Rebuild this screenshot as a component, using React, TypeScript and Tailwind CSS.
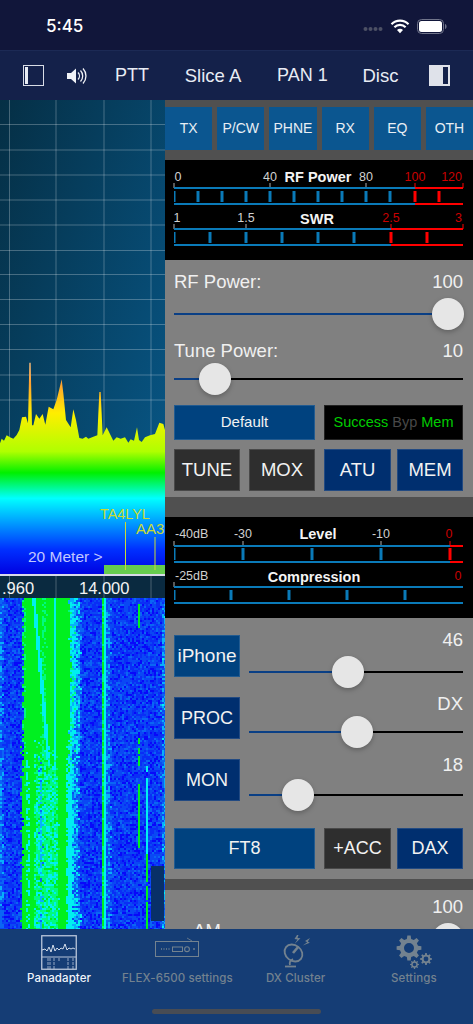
import { useMemo } from "react";

const SANS = "font-['Liberation_Sans',Arial,sans-serif]";

// seeded noise so the waterfall stays the same between renders
function makeRandom(seed: number) {
  let s = seed;
  return () => {
    s = (s * 1664525 + 1013904223) % 4294967296;
    return s / 4294967296;
  };
}

const WATERFALL_COLORS = ["#0808fa", "#0a2ef6", "#0a48f4", "#0a66f4", "#08b0fa", "#00f0f0", "#00fa80", "#00f020"];

function waterfallLevel(px: number, y: number, r: number, r2: number) {
  let v = 0.06 + r * 0.36;
  const n = r2 - 0.5;
  const x = px + n * 2.5;
  const wobble = Math.sin(y / 47) * 1.5;
  if (x < 2) v += 0.2;
  if (x > 161) v += 0.22;
  if (x > 105 && x < 110) v += 0.18;
  if (x > 72 && x < 79 + wobble) v = 0.3 + r * 0.42;
  if (px >= 102 && px < 104) v = 0.84 + r * 0.14;
  if (px === 104) v = 0.66;
  if (px === 138 && ((y > 4 && y < 30) || (y > 138 && y < 145) || (y > 148 && y < 155) || (y > 157 && y < 168) || (y > 184 && y < 250))) v = 0.98;
  if (px === 146 && y > 167 && !(y > 172 && y < 180) && !(y > 283 && y < 288) && !(y > 300 && y < 303)) v = y > 255 ? 0.95 : 0.7;
  if (y + n * 50 < 165) {
    const right = 68 + wobble;
    if (x >= 22 && x < right) {
      const slant = 33 + (y / 165) * 15;
      if (Math.abs(px - slant) < 1.6) v = 0.66;
      else if (Math.abs(px - 54) < 1.2) v = 0.72;
      else if (x < 24 || Math.abs(x - 43) < 2) v = 0.8 + r * 0.14;
      else v = 0.92 + r * 0.08;
    } else if (x >= right && x < 73 + wobble) v = 0.55 + r * 0.25;
  } else {
    if (x >= 21 && x < 26) v = 0.9 + r * 0.1;
    else if (x >= 26 && x < 28) v = 0.68;
    else if (x >= 28 && x < 34) v = 0.88 + r * 0.12;
    else if (x >= 34 && x < 57) v = 0.66 + r * 0.26 - (x > 39 && x < 41 ? 0.2 : 0);
    else if (x >= 57 && x < 66) v = 0.92 + r * 0.08;
    else if (x >= 66 && x < 72) v = 0.64 + r * 0.1;
  }
  return Math.min(WATERFALL_COLORS.length - 1, Math.floor(v * WATERFALL_COLORS.length));
}

function Waterfall() {
  const paths = useMemo(() => {
    const rnd = makeRandom(73);
    const d = WATERFALL_COLORS.map(() => "");
    for (let y = 0; y < 332; y += 2) {
      for (let x = 0; x < 166; x += 2) {
        const i = waterfallLevel(x, y, rnd(), rnd());
        d[i] += `M${x} ${y}h2v2h-2z`;
      }
    }
    return d;
  }, []);
  return (
    <svg viewBox="0 0 165 331" className="block h-[331px] w-[165px]" shapeRendering="crispEdges">
      <g className="blur-[0.7px]">
        <rect width="165" height="331" fill="#0808fa" />
        {paths.map((d, i) => (
          <path key={i} d={d} fill={WATERFALL_COLORS[i]} />
        ))}
      </g>
      <rect x="151" y="268" width="13" height="55" fill="#083068" />
    </svg>
  );
}

const SPECTRUM = [
  [0, 280], [5, 266], [12, 272], [20, 256], [30, 262], [40, 266], [50, 255], [58, 240], [66, 202], [78, 200], [84, 220], [88, 38], [92, 38], [96, 226],
  [100, 226], [108, 192], [118, 206], [128, 192], [136, 224], [146, 170], [160, 178], [170, 150], [185, 88], [190, 130], [198, 210], [212, 232], [220, 178],
  [228, 210], [238, 264], [248, 266], [258, 260], [265, 266], [280, 260], [292, 256], [298, 126], [302, 126], [308, 256], [320, 232], [340, 272], [350, 262],
  [362, 266], [375, 262], [385, 278], [392, 268], [402, 272], [411, 232], [417, 270], [425, 276], [435, 262], [450, 256], [465, 252], [478, 218], [490, 222], [495, 240],
];

const GRID_X = [9.5, 56, 104, 151];
const GRID_Y = [124.5, 150, 175, 200, 225, 250.5, 274.5, 299.5, 324.5, 349.5, 375, 400];

function Panadapter() {
  const points = SPECTRUM.map(([x, y]) => `${x / 3},${350 + y / 3}`).join(" ");
  return (
    <svg viewBox="0 100 165 498" className="block h-[498px] w-[165px]">
      <defs>
        <linearGradient id="panBg" x1="0" y1="0" x2="1" y2="1">
          <stop offset="0" stopColor="#052f45" />
          <stop offset="1" stopColor="#085a8c" />
        </linearGradient>
        <linearGradient id="spec" gradientUnits="userSpaceOnUse" x1="0" y1="362" x2="0" y2="575">
          <stop offset="0" stopColor="#ffc080" />
          <stop offset="0.1" stopColor="#ffa030" />
          <stop offset="0.24" stopColor="#ffee00" />
          <stop offset="0.42" stopColor="#b0ff00" />
          <stop offset="0.52" stopColor="#00f000" />
          <stop offset="0.64" stopColor="#00ffff" />
          <stop offset="0.75" stopColor="#00a0ff" />
          <stop offset="0.88" stopColor="#0030ff" />
          <stop offset="1" stopColor="#0000e0" />
        </linearGradient>
      </defs>
      <rect x="0" y="100" width="165" height="476" fill="url(#panBg)" />
      <rect x="0" y="576" width="165" height="22" fill="#0a2a40" />
      {GRID_X.map((x) => (
        <line key={x} x1={x} x2={x} y1="100" y2="598" stroke="#ffffff" strokeOpacity="0.26" strokeWidth="1" />
      ))}
      {GRID_Y.map((y) => (
        <line key={y} x1="0" x2="165" y1={y} y2={y} stroke="#ffffff" strokeOpacity="0.26" strokeWidth="1" />
      ))}
      <polygon points={`${points} 165,574 0,574`} fill="url(#spec)" />
      <rect x="104" y="565" width="61" height="9" fill="#66cc4e" />
      <line x1="125.5" x2="125.5" y1="522" y2="570" stroke="#c8dc32" />
      <line x1="155" x2="155" y1="537" y2="570" stroke="#c8dc32" />
      <text x="100" y="519" fontSize="14.4" fill="#c8dc32">TA4LYL</text>
      <text x="136" y="534" fontSize="15" fill="#c8dc32">AA3</text>
      <text x="28" y="562" fontSize="15.5" fill="#c0c8ff">20 Meter &gt;</text>
      <rect x="0" y="574" width="165" height="2" fill="#d8d8e8" />
      <text x="2" y="594" fontSize="16.5" fill="#f4f4f4">.960</text>
      <text x="79" y="594" fontSize="16.5" fill="#f4f4f4">14.000</text>
    </svg>
  );
}

type MeterLabel = { x: number; t: string; y: number; anchor?: "start" | "middle" | "end"; red?: boolean; bold?: boolean };
type MeterScale = { top: number; barTop: number; barBottom: number; bottom: number; split: number; ticks: number[]; bars: number[]; labels: MeterLabel[] };

const BLUE = "#0a7ab8";
const RED = "#ff0000";

function Meter({ y, h, scales }: { y: number; h: number; scales: MeterScale[] }) {
  return (
    <svg viewBox={`165 ${y} 308 ${h}`} className="block w-[308px] bg-black" style={{ height: h }}>
      {scales.map((s, i) => (
        <g key={i}>
          {s.labels.map((l) => (
            <text
              key={l.t}
              x={l.x}
              y={l.y}
              fontSize={l.bold ? 14.5 : 12.5}
              fontWeight={l.bold ? 700 : 400}
              textAnchor={l.anchor ?? "middle"}
              fill={l.red ? "#c80000" : l.bold ? "#f4f4f4" : "#d0d0d0"}
            >
              {l.t}
            </text>
          ))}
          {s.ticks.map((x) => (
            <line key={x} x1={x} x2={x} y1={s.top - 5} y2={s.top} stroke={x >= s.split ? RED : "#b0b0b0"} strokeWidth="1" />
          ))}
          <rect x="174" y={s.top - 1} width={s.split - 174} height="2" fill={BLUE} />
          <rect x={s.split} y={s.top - 1} width={463 - s.split} height="2" fill={RED} />
          {s.bars.map((x) => (
            <rect
              key={x}
              x={x === 174 ? 174 : x - 1.5}
              y={s.barTop}
              width={x === 174 ? 1.5 : 3}
              height={s.barBottom - s.barTop}
              fill={x >= s.split ? RED : BLUE}
            />
          ))}
          <rect x="174" y={s.bottom - 1} width={s.split - 174} height="2" fill={BLUE} />
          <rect x={s.split} y={s.bottom - 1} width={463 - s.split} height="2" fill={RED} />
        </g>
      ))}
    </svg>
  );
}

const POWER_SCALES: MeterScale[] = [
  {
    top: 188, barTop: 191, barBottom: 202, bottom: 204, split: 415,
    ticks: [174, 270, 366, 415, 463],
    bars: [174, 198, 222, 246, 270, 294, 318, 342, 366, 390, 415, 439],
    labels: [
      { x: 178, y: 181, t: "0" }, { x: 270, y: 181, t: "40" }, { x: 318, y: 182, t: "RF Power", bold: true }, { x: 366, y: 181, t: "80" },
      { x: 415, y: 181, t: "100", red: true }, { x: 462, y: 181, t: "120", anchor: "end", red: true },
    ],
  },
  {
    top: 229, barTop: 232, barBottom: 243, bottom: 245, split: 391,
    ticks: [174, 246, 391, 463],
    bars: [174, 210, 246, 282, 318, 354, 391, 427],
    labels: [
      { x: 177, y: 222, t: "1" }, { x: 246, y: 222, t: "1.5" }, { x: 317, y: 224, t: "SWR", bold: true },
      { x: 391, y: 222, t: "2.5", red: true }, { x: 462, y: 222, t: "3", anchor: "end", red: true },
    ],
  },
];

const MIC_SCALES: MeterScale[] = [
  {
    top: 546, barTop: 548, barBottom: 560, bottom: 562, split: 450,
    ticks: [174, 243, 381, 450],
    bars: [174, 243, 312, 381, 450],
    labels: [
      { x: 175, y: 538, t: "-40dB", anchor: "start" }, { x: 243, y: 538, t: "-30" }, { x: 318, y: 539, t: "Level", bold: true },
      { x: 381, y: 538, t: "-10" }, { x: 449, y: 538, t: "0", red: true },
    ],
  },
  {
    top: 587, barTop: 590, barBottom: 600, bottom: 603, split: 463,
    ticks: [174],
    bars: [174, 231, 289, 347, 405],
    labels: [
      { x: 175, y: 580, t: "-25dB", anchor: "start" }, { x: 314, y: 582, t: "Compression", bold: true }, { x: 458, y: 580, t: "0", red: true },
    ],
  },
];

function Slider({ thumb, className }: { thumb: number; className?: string }) {
  return (
    <div className={`relative h-[32px] ${className ?? ""}`}>
      <div className="absolute left-0 right-0 top-[15px] h-[2px] bg-black" />
      <div className="absolute left-0 top-[15px] h-[2px] bg-[#0a3f85]" style={{ width: thumb }} />
      <div
        className="absolute top-0 -ml-[16px] h-[32px] w-[32px] rounded-full bg-[#e6e6e6] shadow-[0_2px_5px_rgba(0,0,0,0.25)]"
        style={{ left: thumb }}
      />
    </div>
  );
}

function Btn({ children, className }: { children: React.ReactNode; className: string }) {
  return <div className={`flex items-center justify-center border border-[#ffffff22] text-[#f2f2f2] ${className}`}>{children}</div>;
}

function TabIcon({ children, w, h, className }: { children: React.ReactNode; w: number; h: number; className?: string }) {
  return (
    <svg viewBox={`0 0 ${w} ${h}`} width={w} height={h} className={`block ${className ?? ""}`}>
      {children}
    </svg>
  );
}

function gearPath(cx: number, cy: number, r: number, hole: number, teeth: number) {
  const inner = r * 0.74;
  const step = (Math.PI * 2) / teeth;
  let d = "";
  for (let i = 0; i < teeth; i++) {
    const a = i * step - Math.PI / 2;
    const pts: [number, number][] = [
      [inner, a - step * 0.3],
      [r, a - step * 0.17],
      [r, a + step * 0.17],
      [inner, a + step * 0.3],
    ];
    pts.forEach(([rad, ang], k) => {
      d += `${i === 0 && k === 0 ? "M" : "L"}${(cx + rad * Math.cos(ang)).toFixed(2)} ${(cy + rad * Math.sin(ang)).toFixed(2)}`;
    });
  }
  d += `Z M${cx - hole} ${cy}a${hole} ${hole} 0 1 0 ${hole * 2} 0a${hole} ${hole} 0 1 0 ${-hole * 2} 0Z`;
  return d;
}

const MUTED = "#73828f";

function PanadapterIcon() {
  const c = "#b9c6da";
  return (
    <TabIcon w={36} h={35} className="mt-[6px]">
      <rect x="0.75" y="0.75" width="34.5" height="33.5" fill="none" stroke={c} strokeWidth="1.3" />
      <line x1="1" x2="35" y1="22" y2="22" stroke={c} strokeWidth="1" />
      <path d="M1 15l3-1 2 2 2-4 2 5 2-7 2 6 2-3 2 2 2-2 2 1 2-5 2 6 2-2 2 1 2-1 2 1" fill="none" stroke="#e6ecf4" strokeWidth="0.9" />
      <path d="M7 23v11M9 23v11M13 23v11M18 23v3M27 23v11M32 23v11" stroke={c} strokeWidth="0.8" strokeDasharray="3 1" />
    </TabIcon>
  );
}

function FlexIcon() {
  return (
    <TabIcon w={44} h={35} className="mt-[6px]">
      <rect x="0.5" y="6.5" width="43" height="15" fill="none" stroke={MUTED} strokeWidth="1" />
      <path d="M37 6l-5-3" stroke={MUTED} strokeWidth="0.8" />
      <path d="M6 14h1M8.5 14h1M11 14h1M13.5 14h1" stroke={MUTED} strokeWidth="1.6" />
      <rect x="17.5" y="12" width="10" height="4.5" fill="none" stroke={MUTED} strokeWidth="1" />
      <circle cx="32" cy="14.2" r="2.4" fill="none" stroke={MUTED} strokeWidth="1.1" />
      <circle cx="39" cy="14" r="0.9" fill={MUTED} />
    </TabIcon>
  );
}

function DishIcon() {
  return (
    <TabIcon w={36} h={35} className="mt-[6px]">
      <path d="M12 30c-1-3 1-5 3-6" fill="none" stroke={MUTED} strokeWidth="1.8" />
      <path d="M7 31.5h11" stroke={MUTED} strokeWidth="1.8" />
      <ellipse cx="15.5" cy="18" rx="9.5" ry="7.8" transform="rotate(38 15.5 18)" fill="none" stroke={MUTED} strokeWidth="1.8" />
      <path d="M15 18l5.5-6.5" stroke={MUTED} strokeWidth="2.6" />
      <path d="M19 0l-2.5 4 3 .4-3 4.6 6-5.8-3-.3 1-3z" fill={MUTED} />
      <path d="M32 3l-5 3 2.3 1.2-4.5 3.3 7-2.8-2-1.2z" fill={MUTED} />
    </TabIcon>
  );
}

function GearsIcon() {
  return (
    <TabIcon w={36} h={35} className="mt-[6px]">
      <path d={gearPath(13, 13, 12.5, 5, 8)} fill={MUTED} fillRule="evenodd" />
      <path d={gearPath(30, 24, 6, 2.4, 8)} fill={MUTED} fillRule="evenodd" />
      <path d={gearPath(18.5, 29.5, 4.5, 1.8, 8)} fill={MUTED} fillRule="evenodd" />
    </TabIcon>
  );
}

const TABS = [
  { label: "Panadapter", icon: <PanadapterIcon />, active: true },
  { label: "FLEX-6500 settings", icon: <FlexIcon />, active: false },
  { label: "DX Cluster", icon: <DishIcon />, active: false },
  { label: "Settings", icon: <GearsIcon />, active: false },
];

export default function App() {
  return (
    <div className={`${SANS} flex h-[1024px] w-[473px] flex-col overflow-hidden bg-[#11163a]`}>
      {/* status bar */}
      <div className="flex h-[50px] items-center pt-[3px] pr-[26px] pl-[46px]">
        <span className="font-['Inter',sans-serif] text-[17px] font-medium text-white">5:45</span>
        <div className="ml-auto flex items-center">
          <svg width="21" height="6" viewBox="0 0 21 6" className="mt-[5px] mr-[6px]">
            {[2.5, 7.5, 12.5, 17.5].map((x) => (
              <circle key={x} cx={x} cy="3" r="2" fill="#4c5064" />
            ))}
          </svg>
          <svg width="20" height="15" viewBox="0 0 20 15" className="mr-[7px]">
            <path d="M1.5 5.2a12 12 0 0 1 17 0M4.4 8.2a8 8 0 0 1 11.2 0" fill="none" stroke="#fff" strokeWidth="2.2" />
            <path d="M7 11a4.2 4.2 0 0 1 6 0l-3 3.2z" fill="#fff" />
          </svg>
          <svg width="30" height="15" viewBox="0 0 30 15">
            <rect x="0.5" y="0.5" width="26" height="14" rx="4" fill="none" stroke="#70748a" />
            <rect x="2" y="2" width="23" height="11" rx="2.5" fill="#fff" />
            <path d="M28 5v5c1-.3 1.6-1.3 1.6-2.5S29 5.3 28 5z" fill="#70748a" />
          </svg>
        </div>
      </div>

      {/* nav bar */}
      <div className="flex h-[50px] items-center border-t border-[#1c2a55] bg-[#14214a] pl-[23px] text-[18px] text-[#e8ecf4]">
        <svg width="21" height="21" viewBox="0 0 21 21" className="shrink-0">
          <rect x="0.5" y="0.5" width="20" height="20" fill="none" stroke="#d8dce6" />
          <rect x="2" y="2" width="3" height="17" fill="#e8ecf4" />
        </svg>
        <svg width="21" height="18" viewBox="0 0 21 18" className="ml-[23px] shrink-0">
          <path d="M0 6h4l5-4.5v15L4 12H0z" fill="#f0f2f6" />
          <path d="M11 5.5a5 5 0 0 1 0 7M13.5 3.5a8 8 0 0 1 0 11M16 1.5a11 11 0 0 1 0 15" fill="none" stroke="#f0f2f6" strokeWidth="1.3" />
        </svg>
        <span className="ml-[27px] w-[34px] text-center whitespace-nowrap">PTT</span>
        <span className="ml-[35px] w-[58px] text-center text-[18.5px] whitespace-nowrap">Slice A</span>
        <span className="ml-[35px] w-[50px] text-center whitespace-nowrap">PAN 1</span>
        <span className="ml-[35px] w-[37px] text-center text-[18.5px] whitespace-nowrap">Disc</span>
        <svg width="21" height="21" viewBox="0 0 21 21" className="ml-[30px] shrink-0">
          <rect x="0" y="0" width="21" height="21" fill="#dfe2ea" />
          <rect x="14" y="2" width="5" height="17" fill="#14214a" />
        </svg>
      </div>

      {/* main */}
      <div className="flex min-h-0 flex-1 overflow-hidden">
        <div className="w-[165px] shrink-0 overflow-hidden">
          <Panadapter />
          <Waterfall />
        </div>

        <div className="w-[308px] shrink-0 bg-[#808080]">
          <div className="flex gap-[5px] bg-[#505050] pt-[7px] pb-[10px]">
            {["TX", "P/CW", "PHNE", "RX", "EQ", "OTH"].map((t) => (
              <div key={t} className="flex h-[43px] flex-1 items-center justify-center bg-[#0b5690] text-[14px] text-[#e8eef4]">
                {t}
              </div>
            ))}
          </div>

          <Meter y={160} h={100} scales={POWER_SCALES} />

          <div className="pt-[10px] pr-[10px] pb-[6px] pl-[9px]">
            <div className="flex h-[24px] items-center justify-between text-[18.5px] leading-[24px] text-[#f0f0f0]">
              <span>RF Power:</span>
              <span>100</span>
            </div>
            <Slider thumb={274} className="mt-[4px]" />
            <div className="mt-[9px] flex h-[24px] items-center justify-between text-[18.5px] leading-[24px] text-[#f0f0f0]">
              <span>Tune Power:</span>
              <span>10</span>
            </div>
            <Slider thumb={41} />
            <div className="mt-[10px] flex h-[35px] gap-[9px]">
              <Btn className="w-[141px] bg-[#00427f] text-[15px]">Default</Btn>
              <div className="flex w-[139px] items-center justify-center gap-[4px] border border-[#ffffff22] bg-black text-[14.5px]">
                <span className="text-[#00cc00]">Success</span>
                <span className="text-[#484848]">Byp</span>
                <span className="text-[#00cc00]">Mem</span>
              </div>
            </div>
            <div className="mt-[9px] flex h-[42px] text-[18.5px]">
              <Btn className="w-[66px] bg-[#2e2e2e]">TUNE</Btn>
              <Btn className="ml-[9px] w-[66px] bg-[#2e2e2e]">MOX</Btn>
              <Btn className="ml-[9px] w-[67px] bg-[#002f6f]">ATU</Btn>
              <Btn className="ml-[6px] w-[66px] bg-[#002f6f]">MEM</Btn>
            </div>
          </div>

          <div className="h-[20px] bg-[#505050]" />

          <Meter y={517} h={101} scales={MIC_SCALES} />

          <div className="pt-[11px] pr-[10px] pb-[10px] pl-[9px] text-[#f0f0f0]">
            <div className="flex gap-[9px]">
              <Btn className="mt-[6px] h-[42px] w-[66px] shrink-0 bg-[#00427f] text-[19px]">iPhone</Btn>
              <div className="flex-1">
                <div className="text-right text-[18.5px] leading-[22px]">46</div>
                <Slider thumb={99} className="mt-[5px]" />
              </div>
            </div>
            <div className="mt-[5px] flex gap-[9px]">
              <Btn className="mt-[4px] h-[42px] w-[66px] shrink-0 bg-[#002f6f] text-[18px]">PROC</Btn>
              <div className="flex-1">
                <div className="text-right text-[18.5px] leading-[22px]">DX</div>
                <Slider thumb={108} className="mt-[1px]" />
              </div>
            </div>
            <div className="mt-[6px] flex gap-[9px]">
              <Btn className="mt-[5px] h-[42px] w-[66px] shrink-0 bg-[#002f6f] text-[18px]">MON</Btn>
              <div className="flex-1">
                <div className="text-right text-[18.5px] leading-[22px]">18</div>
                <Slider thumb={49} className="mt-[3px]" />
              </div>
            </div>
            <div className="mt-[17px] flex h-[41px] text-[18px]">
              <Btn className="w-[141px] bg-[#00427f]">FT8</Btn>
              <Btn className="ml-[9px] w-[67px] bg-[#2e2e2e]">+ACC</Btn>
              <Btn className="ml-[6px] w-[66px] bg-[#002f6f]">DAX</Btn>
            </div>
          </div>

          <div className="h-[11px] bg-[#505050]" />

          <div className="flex gap-[9px] pt-[6px] pr-[10px] pl-[9px] text-[#f0f0f0]">
            <div className="mt-[23px] w-[66px] shrink-0 text-center text-[18.5px] leading-[24px]">AM</div>
            <div className="flex-1">
              <div className="text-right text-[18.5px] leading-[22px]">100</div>
              <Slider thumb={199} className="mt-[5px]" />
            </div>
          </div>
        </div>
      </div>

      {/* tab bar */}
      <div className="relative h-[95px] shrink-0 bg-[#153d75]">
        <div className="grid grid-cols-4">
          {TABS.map((t) => (
            <div key={t.label} className="flex flex-col items-center">
              {t.icon}
              <span className={`mt-[1px] font-['Inter',sans-serif] text-[11.5px] leading-[14px] font-medium tracking-[0.1px] whitespace-nowrap ${t.active ? "text-[#f0f4fa]" : "text-[#73828f]"}`}>
                {t.label}
              </span>
            </div>
          ))}
        </div>
        <div className="absolute bottom-[10px] left-[152px] h-[5px] w-[169px] rounded-full bg-[#484c54]" />
      </div>
    </div>
  );
}
